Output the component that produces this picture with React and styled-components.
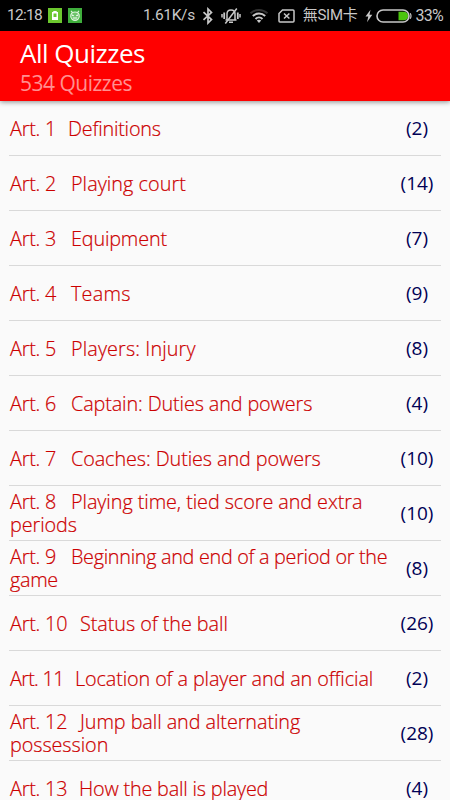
import React from "react";
import styled, { createGlobalStyle } from "styled-components";

const quizzes = [
  { art: 1, title: "Definitions", count: 2, indent: 58, spacing: -0.2 },
  { art: 2, title: "Playing court", count: 14, indent: 61, spacing: 0.05 },
  { art: 3, title: "Equipment", count: 7, indent: 61, spacing: -0.15 },
  { art: 4, title: "Teams", count: 9, indent: 61, spacing: 0.25 },
  { art: 5, title: "Players: Injury", count: 8, indent: 61, spacing: 0.12 },
  { art: 6, title: "Captain: Duties and powers", count: 4, indent: 61, spacing: -0.11 },
  { art: 7, title: "Coaches: Duties and powers", count: 10, indent: 61, spacing: -0.08 },
  { art: 8, title: "Playing time, tied score and extra\nperiods", count: 10, indent: 61, spacing: -0.06 },
  { art: 9, title: "Beginning and end of a period or the\ngame", count: 8, indent: 61, spacing: -0.29 },
  { art: 10, title: "Status of the ball", count: 26, indent: 70, spacing: -0.05 },
  { art: 11, title: "Location of a player and an official", count: 2, indent: 65, spacing: -0.11 },
  { art: 12, title: "Jump ball and alternating\npossession", count: 28, indent: 70, spacing: -0.06 },
  { art: 13, title: "How the ball is played", count: 4, indent: 69, spacing: -0.18 },
];

const BatteryAppIcon = () => (
  <svg width="14" height="15" viewBox="0 0 14 15">
    <rect width="14" height="15" fill="#6cc72e" />
    <path d="M5.3 3h3.4v1H10v8H4V4h1.3z" fill="#fff" />
    <rect x="5.5" y="5.5" width="3" height="3.5" fill="#6cc72e" />
  </svg>
);

const RobotAppIcon = () => (
  <svg width="14" height="15" viewBox="0 0 14 15">
    <rect width="14" height="15" fill="#3fae3c" />
    <path d="M3 2.8l1.8 2M11 2.8l-1.8 2" stroke="#dff3dd" strokeWidth="1.2" />
    <path d="M4 11.2C1.6 9 2.4 4 7 4s5.4 5 3 7.2c-1.6 1.2-4.4 1.2-6 0z" fill="#6fc56c" stroke="#dff3dd" strokeWidth="1.1" />
    <path d="M4 7l1.7.7M10 7l-1.7.7M4.8 10h4.4" stroke="#fff" strokeWidth="1.2" />
  </svg>
);

const BluetoothIcon = () => (
  <svg width="12" height="18" viewBox="0 0 12 18" fill="none" stroke="currentColor" strokeWidth="1.7">
    <path d="M1.5 5.2l8 7.3L6 16V2l3.5 3.5-8 7.3" />
  </svg>
);

const MutedBellIcon = () => (
  <svg width="20" height="18" viewBox="0 0 20 18" fill="none" stroke="currentColor" strokeWidth="1.5">
    <path d="M6 12.5V7C6 4 7.5 3 10 3s4 1 4 4v5.5M4.5 13h11M8 15.2h4" />
    <path d="M3.2 5.5v6.5M16.8 5.5v6.5" strokeWidth="1.8" />
    <path d="M1 7v3.5M19 7v3.5" />
    <path d="M15.8 1.5L4.3 16.5" />
  </svg>
);

const WifiIcon = () => (
  <svg width="20" height="16" viewBox="0 0 20 16" fill="none" strokeWidth="2">
    <path d="M1.5 5.2C6.5.8 13.5.8 18.5 5.2" stroke="#333" />
    <path d="M3.8 8C7.3 4.8 12.7 4.8 16.2 8M6.5 11c2-2 5-2 7 0" stroke="currentColor" />
    <path d="M7.8 12.5L10 15l2.2-2.5c-1.2-1-3.2-1-4.4 0z" fill="currentColor" />
  </svg>
);

const NoSimIcon = () => (
  <svg width="17" height="14" viewBox="0 0 17 14" fill="none" stroke="currentColor" strokeWidth="1.5">
    <path d="M4.5 1H15q1 0 1 1v10q0 1-1 1H2q-1 0-1-1V4.5z" />
    <path d="M6 4.5l5.4 5M11.4 4.5L6 9.5" />
  </svg>
);

const BoltIcon = () => (
  <svg width="8" height="14" viewBox="0 0 8 14" fill="currentColor">
    <path d="M5.5.8L.5 7.6h2.8L2 13.2l5.3-7.5H4.5z" />
  </svg>
);

const BatteryIcon = () => (
  <svg width="36" height="14" viewBox="0 0 36 14">
    <path d="M22.5 2.8H28a4.2 4.2 0 0 1 0 8.4h-5.5z" fill="#4bc40d" />
    <rect x="1" y="1" width="32" height="12" rx="6" fill="none" stroke="currentColor" strokeWidth="1.6" />
    <path d="M34.2 4.3q1.6 2.7 0 5.4" fill="none" stroke="currentColor" strokeWidth="1.2" />
  </svg>
);

const App = () => {
  return (
    <Screen>
      <GlobalStyle />
      <StatusBar>
        <Status $left={7} $size={15.5} $spacing={-0.7}>12:18</Status>
        <Status $left={6}><BatteryAppIcon /></Status>
        <Status $left={6}><RobotAppIcon /></Status>
        <Spacer />
        <Status $size={15.5} $spacing={-0.35}>1.61K/s</Status>
        <Status $left={7}><BluetoothIcon /></Status>
        <Status $left={7}><MutedBellIcon /></Status>
        <Status $left={8}><WifiIcon /></Status>
        <Status $left={9}><NoSimIcon /></Status>
        <Status $left={8} $size={15} $spacing={-0.3}>無SIM卡</Status>
        <Status $left={8}><BoltIcon /></Status>
        <Status $left={3}><BatteryIcon /></Status>
        <Status $left={3} $size={16} $spacing={-0.7}>33%</Status>
      </StatusBar>
      <Header>
        <h1>All Quizzes</h1>
        <h2>534 Quizzes</h2>
      </Header>
      <List>
        {quizzes.map(({ art, title, count, indent, spacing }) => (
          <Row key={art}>
            <Title $spacing={spacing}>
              <ArtNumber $width={indent} $spacing={String(art).includes("11") ? -0.7 : -0.2}>
                Art. {art}
              </ArtNumber>
              {title}
            </Title>
            <Count>({count})</Count>
          </Row>
        ))}
      </List>
    </Screen>
  );
};

export default App;

const GlobalStyle = createGlobalStyle`
  body {
    margin: 0;
    background-color: #fafafa;
  }
`;

const Screen = styled.div`
  width: 450px;
  height: 800px;
  overflow: hidden;
  display: flex;
  flex-direction: column;
  background-color: #fafafa;
  font-family: "Open Sans", "Noto Sans", sans-serif;
`;

const StatusBar = styled.div`
  height: 31px;
  flex-shrink: 0;
  box-sizing: border-box;
  padding-right: 7px;
  display: flex;
  align-items: center;
  background-color: #000;
  color: #c8c8c8;
  font-family: "Roboto", "Noto Sans CJK TC", sans-serif;
`;

const Status = styled.div`
  display: flex;
  flex-shrink: 0;
  margin-left: ${({ $left }) => $left || 0}px;
  font-size: ${({ $size }) => $size || 15}px;
  letter-spacing: ${({ $spacing }) => $spacing || 0}px;
  line-height: 31px;
  white-space: nowrap;
`;

const Spacer = styled.div`
  flex: 1;
`;

const Header = styled.header`
  height: 70px;
  flex-shrink: 0;
  box-sizing: border-box;
  padding: 7px 20px 0;
  background-color: #ff0000;
  box-shadow: 0 1px 5px rgba(0, 0, 0, 0.45);
  z-index: 1;

  h1,
  h2 {
    margin: 0;
    font-weight: 400;
    white-space: nowrap;
  }
  h1 {
    color: #fff;
    font-size: 26px;
    letter-spacing: -0.5px;
    line-height: 31px;
  }
  h2 {
    color: #ff9090;
    font-size: 21px;
    letter-spacing: -0.5px;
    line-height: 29px;
  }
`;

const List = styled.main`
  padding: 0 9px;
`;

const Row = styled.div`
  height: 55px;
  box-sizing: border-box;
  display: flex;
  align-items: center;
  border-bottom: 1px solid #d9d9d9;
`;

const Title = styled.div`
  flex: 1;
  padding-left: 1px;
  color: #cc0000;
  font-size: 19.8px;
  font-weight: 300;
  -webkit-text-stroke: 0.2px #cc0000;
  letter-spacing: ${({ $spacing }) => $spacing}px;
  line-height: 23px;
  white-space: pre;
`;

const ArtNumber = styled.span`
  display: inline-block;
  width: ${({ $width }) => $width}px;
  letter-spacing: ${({ $spacing }) => $spacing}px;
`;

const Count = styled.div`
  width: 48px;
  color: #000055;
  font-size: 19px;
  text-align: center;
`;
